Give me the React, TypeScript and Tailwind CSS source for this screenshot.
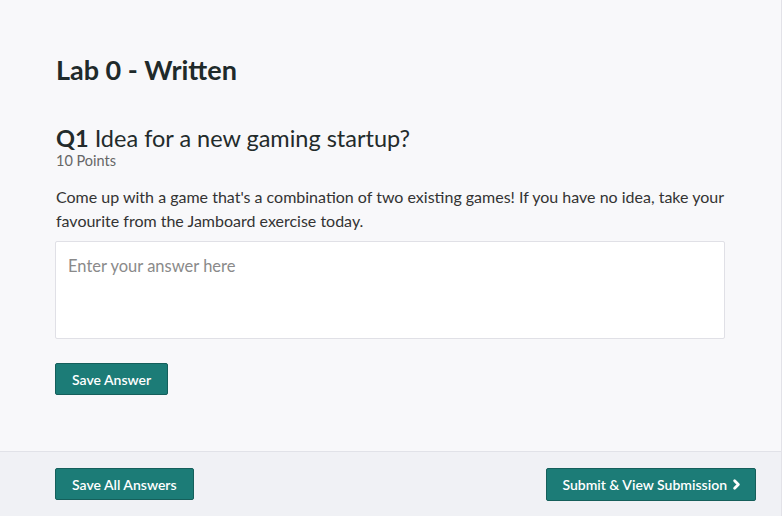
import { ChevronRight } from "lucide-react";

const font = { fontFamily: "Lato, 'Open Sans', sans-serif" };

export default function App() {
  return (
    <div
      className="w-[782px] h-[516px] flex flex-col bg-[#f8f8fa] text-[#232b2b] border-r border-[#e2e2e8]"
      style={font}
    >
      {/* Question area */}
      <main className="flex-1 pl-[56px] pr-[57px] pt-[54px]">
        <h1 className="text-[27px] font-bold leading-[32px] text-[#1f2a2a]">Lab 0 - Written</h1>

        <section className="mt-[38px]">
          <h2 className="text-[23.5px] leading-[28px]">
            <span className="font-bold">Q1</span> Idea for a new gaming startup?
          </h2>
          <p className="text-[14.5px] leading-[18px] text-[#666]">10 Points</p>

          <p className="mt-[15px] text-[16px] leading-[24px] text-[#333]">
            Come up with a game that's a combination of two existing games! If you have no idea, take your
            favourite from the Jamboard exercise today.
          </p>

          <textarea
            placeholder="Enter your answer here"
            className="mt-[8px] -ml-[1px] block w-[670px] h-[98px] resize-none rounded-[2px] border border-[#e0e0e6] bg-white px-[12px] py-[14px] text-[16.5px] leading-[20px] placeholder:text-[#8a8a8a] outline-none"
          />

          <button className="mt-[24px] -ml-[1px] h-[32px] px-[16px] rounded-[2px] border border-[#155f5b] bg-[#1c7c77] text-white text-[14px] font-semibold">
            Save Answer
          </button>
        </section>
      </main>

      {/* Footer actions */}
      <footer className="h-[65px] border-t border-[#e1e2e8] bg-[#f0f1f5] flex items-center justify-between pl-[55px] pr-[25px]">
        <button className="h-[32px] px-[16px] rounded-[2px] border border-[#155f5b] bg-[#1c7c77] text-white text-[14px] font-semibold">
          Save All Answers
        </button>
        <button className="h-[33px] pl-[15px] pr-[11px] rounded-[2px] border border-[#155f5b] bg-[#1c7c77] text-white text-[14px] font-semibold flex items-center gap-[2px]">
          Submit &amp; View Submission
          <ChevronRight size={15} strokeWidth={4.5} />
        </button>
      </footer>
    </div>
  );
}
